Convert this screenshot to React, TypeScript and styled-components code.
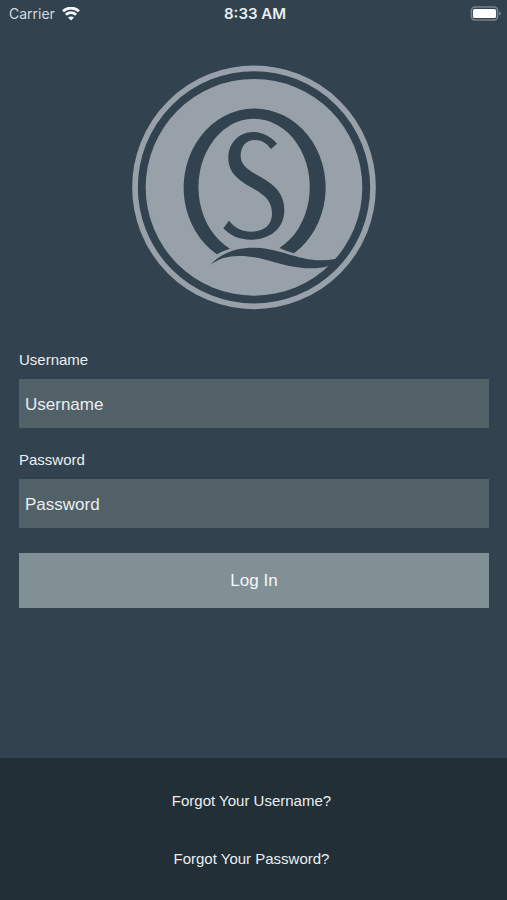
import React from "react";
import styled, { createGlobalStyle } from "styled-components";

const slate = "#32424e";
const silver = "#98a1a9";

const GlobalStyle = createGlobalStyle`
  *, *::before, *::after { box-sizing: border-box; }
  body {
    margin: 0;
    background: ${slate};
    color: #e9eef1;
    font-family: "Liberation Sans", Arial, sans-serif;
  }
`;

const Screen = styled.div`
  min-height: 100vh;
  display: flex;
  flex-direction: column;
  background: ${slate};
`;

const StatusBar = styled.header`
  height: 28px;
  padding: 0 6px 0 9px;
  display: grid;
  grid-template-columns: 1fr auto 1fr;
  align-items: center;
  font-family: Inter, sans-serif;
  font-size: 14px;
  line-height: 20px;
`;

const Carrier = styled.div`
  display: flex;
  align-items: center;
  gap: 7px;
  color: #d3dade;
`;

const Clock = styled.time`
  font-size: 15px;
  font-weight: 600;
  color: #e9eef1;
`;

const Battery = styled.svg`
  justify-self: end;
`;

const Main = styled.main`
  flex: 1;
  display: flex;
  flex-direction: column;
  padding: 30px 18px 24px 19px;
`;

const Logo = styled.svg`
  align-self: center;
  width: 260px;
  height: 260px;
`;

const Form = styled.form`
  display: flex;
  flex-direction: column;
  margin-top: 32px;
`;

const Field = styled.div`
  display: flex;
  flex-direction: column;
  gap: 9px;
  margin-bottom: 22px;
`;

const Label = styled.label`
  font-size: 15px;
  line-height: 20px;
`;

const Input = styled.input`
  width: 100%;
  height: 49px;
  padding: 2px 6px 0;
  border: 0;
  border-radius: 0;
  background: #526068;
  color: #e9eef1;
  font-family: inherit;
  font-size: 17px;
  &::placeholder { color: #e9eef1; opacity: 1; }
`;

const LoginButton = styled.button`
  height: 55px;
  margin-top: 3px;
  border: 0;
  background: #819095;
  color: #f3f7f8;
  font-family: inherit;
  font-size: 17px;
  cursor: pointer;
`;

const Footer = styled.footer`
  display: flex;
  flex-direction: column;
  align-items: center;
  gap: 38px;
  padding: 33px 24px 31px 20px;
  background: #232f36;
`;

const FooterLink = styled.a`
  color: #e9eef1;
  font-size: 15px;
  line-height: 20px;
  text-decoration: none;
`;

export default function App() {
  return (
    <>
      <GlobalStyle />
      <Screen>
        <StatusBar>
          <Carrier>
            <span>Carrier</span>
            <svg width="18" height="14" viewBox="0 0 18 14" fill="none" stroke="#f5f8f9" strokeWidth="2.8" aria-label="Wi-Fi">
              <path d="M1 4.200C5.500 0 12.500 0 17 4.200" />
              <path d="M3.900 7.700C6.800 5 11.200 5 14.100 7.700" />
              <path d="M9 13.600 6 10.500C7.700 9 10.300 9 12 10.500Z" fill="#f5f8f9" stroke="none" />
            </svg>
          </Carrier>
          <Clock>8:33 AM</Clock>
          <Battery width="31" height="16" viewBox="0 0 31 16" aria-label="Battery">
            <rect x="1.500" y="1" width="26" height="13" rx="3.500" fill="none" stroke="#78838b" strokeWidth="1.600" />
            <rect x="3" y="3" width="23" height="9" rx="1.500" fill="#fff" />
            <path d="M29 5.200Q30.800 6 30.800 7.500T29 9.800Z" fill="#78838b" />
          </Battery>
        </StatusBar>

        <Main>
          <Logo viewBox="0 0 780 780" role="img" aria-label="Company logo">
            <circle cx="390" cy="388" r="357" fill="none" stroke={silver} strokeWidth="17" />
            <circle cx="390" cy="388" r="325" fill={silver} />
            <g fill={slate}>
              <path d="M278 589A213 237 0 1 1 510 586Q488 580 466 570A167 205 0 1 0 318 572Q297 578 278 589Z" />
              <path d="M258 621C296 580 345 568 395 569C470 571 522 609 597 607C620 606 640 602 656 596L616 623C590 631 560 632 530 629C460 622 420 594 345 594C310 594 285 602 258 621Z" />
              <path d="M459 257C440 235 415 222 388 222C345 222 313 255 313 300C313 345 345 368 385 390C425 412 444 430 444 468C444 500 420 521 382 521C355 521 332 510 315 488L298 511C318 533 345 545 380 545C440 545 481 510 481 456C481 410 455 382 410 357C370 335 350 320 350 294C350 265 366 246 392 246C412 246 428 255 441 273Z" />
            </g>
          </Logo>

          <Form onSubmit={(event) => event.preventDefault()}>
            <Field>
              <Label htmlFor="username">Username</Label>
              <Input id="username" type="text" placeholder="Username" autoComplete="username" />
            </Field>
            <Field>
              <Label htmlFor="password">Password</Label>
              <Input id="password" type="password" placeholder="Password" autoComplete="current-password" />
            </Field>
            <LoginButton type="submit">Log In</LoginButton>
          </Form>
        </Main>

        <Footer>
          <FooterLink href="#forgot-username">Forgot Your Username?</FooterLink>
          <FooterLink href="#forgot-password">Forgot Your Password?</FooterLink>
        </Footer>
      </Screen>
    </>
  );
}
